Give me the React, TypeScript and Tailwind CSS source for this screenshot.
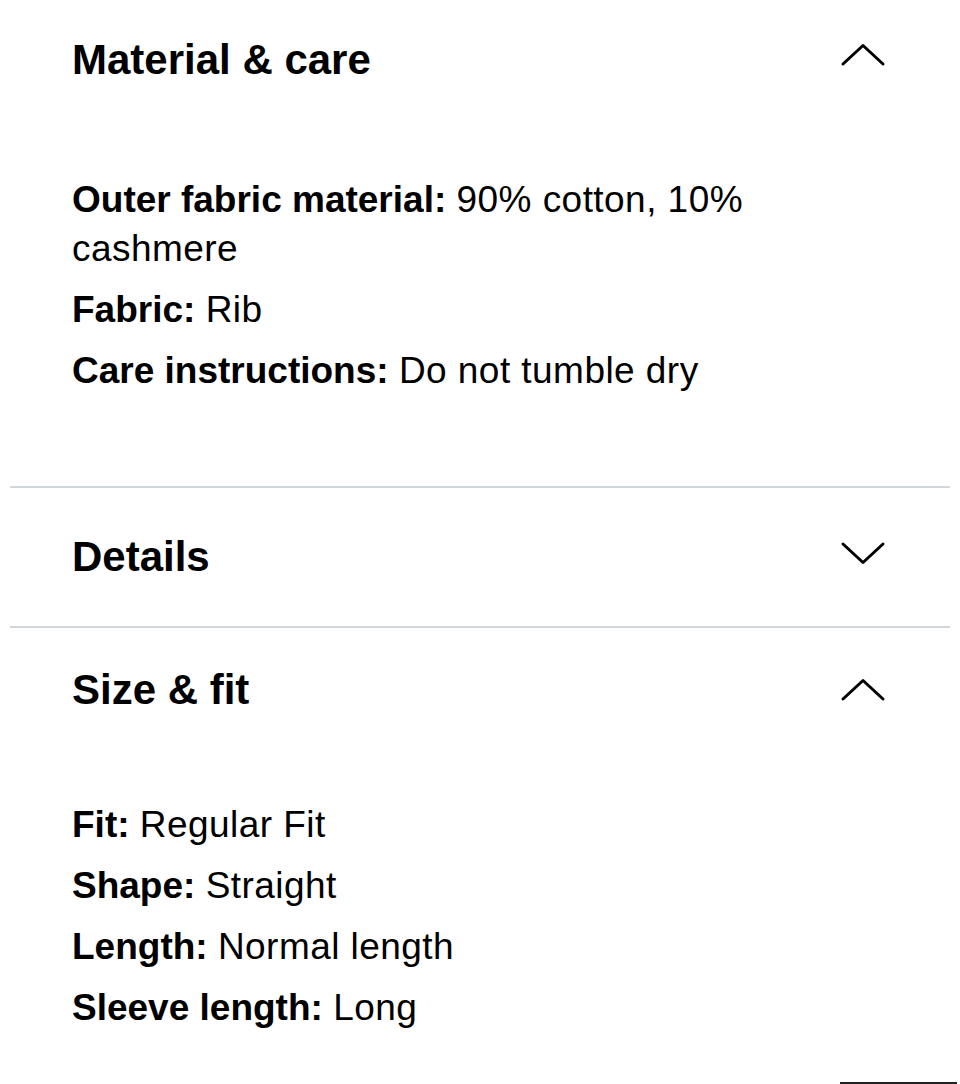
import React from "react";

const font = { fontFamily: '"Liberation Sans", Arial, sans-serif' };

function Chevron({ up, shift }: { up: boolean; shift: string }) {
  return (
    <svg width="40" height="20" viewBox="0 0 40 20" className={`overflow-visible shrink-0 ${shift}`}>
      <polyline
        points={up ? "0,19 20,0.5 40,19" : "0,1 20,19.5 40,1"}
        fill="none"
        stroke="#000"
        strokeWidth="3"
        strokeLinecap="round"
        strokeLinejoin="round"
      />
    </svg>
  );
}

function Header({ title, up, h, shift }: { title: string; up: boolean; h: string; shift: string }) {
  return (
    <div className={`flex items-center justify-between pl-[72px] pr-[77px] ${h}`}>
      <h2 className="text-[42px] leading-[48px] font-bold text-black">{title}</h2>
      <Chevron up={up} shift={shift} />
    </div>
  );
}

function Row({ label, value }: { label: string; value: string }) {
  return (
    <p className="text-[37px] leading-[49px] text-black">
      <span className="font-bold">{label}</span>{" "}
      <span className="tracking-[0.45px]">{value}</span>
    </p>
  );
}

function Divider() {
  return <div className="mx-[10px] h-[2px] bg-[#d0d6d9]" />;
}

export default function App() {
  return (
    <div className="w-[960px] h-[1084px] overflow-hidden bg-white" style={font}>
      <section>
        <Header title="Material & care" up h="h-[120px]" shift="mb-[10px]" />
        <div className="flex flex-col gap-3 pl-[72px] pr-[77px] pt-[55px] pb-[91px]">
          <Row label="Outer fabric material:" value="90% cotton, 10% cashmere" />
          <Row label="Fabric:" value="Rib" />
          <Row label="Care instructions:" value="Do not tumble dry" />
        </div>
      </section>
      <Divider />
      <Header title="Details" up={false} h="h-[138px]" shift="mb-[8px]" />
      <Divider />
      <section>
        <Header title="Size & fit" up h="h-[124px]" shift="mb-0" />
        <div className="flex flex-col gap-3 pl-[72px] pr-[77px] pt-[48px]">
          <Row label="Fit:" value="Regular Fit" />
          <Row label="Shape:" value="Straight" />
          <Row label="Length:" value="Normal length" />
          <Row label="Sleeve length:" value="Long" />
        </div>
      </section>
      <div className="flex justify-end pr-[3px] mt-[50px]">
        <div className="w-[117px] h-[2px] bg-[#222]" />
      </div>
    </div>
  );
}
